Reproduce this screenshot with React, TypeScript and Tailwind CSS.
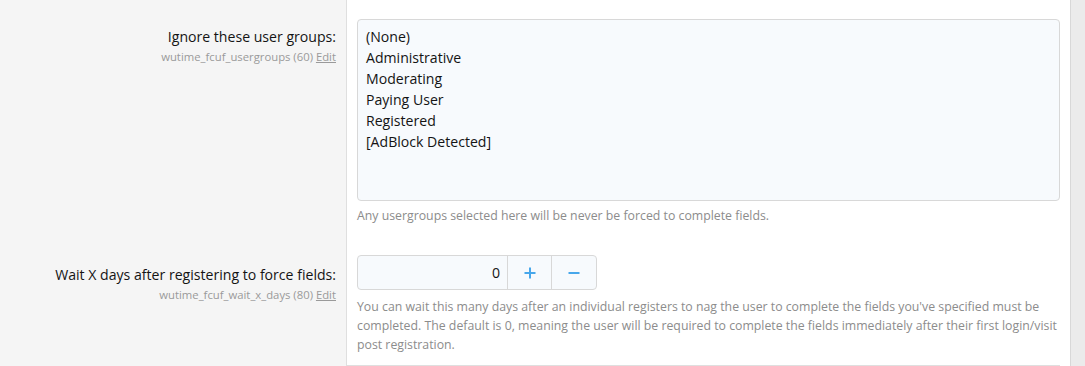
import React from "react";

const font = { fontFamily: '"Open Sans", "Segoe UI", sans-serif' };

function Hint({ name, order }: { name: string; order: number }) {
  return (
    <div className="text-[11.3px] leading-[16px] text-[#9a9a9a] mt-[2px]">
      {name} ({order}) <span className="underline">Edit</span>
    </div>
  );
}

export default function App() {
  const groups = ["(None)", "Administrative", "Moderating", "Paying User", "Registered", "[AdBlock Detected]"];
  return (
    <div className="flex w-[1085px] h-[366px] overflow-hidden bg-white" style={font}>
      <div className="flex flex-col w-[1071px] border-r border-[#d8d8d8]">
        {/* Row 1 */}
        <div className="flex">
          <div className="w-[347px] shrink-0 bg-[#f5f5f5] border-r border-[#dfdfdf] pr-[10px] pt-[27px] text-right">
            <div className="text-[14.1px] leading-[20px] text-[#141414]">Ignore these user groups:</div>
            <Hint name="wutime_fcuf_usergroups" order={60} />
          </div>
          <div className="flex-1 pl-[10px] pr-[10px] pt-[19px] pb-[20px]">
            <div className="w-[703px] h-[182px] border border-[#d8d8d8] rounded-[4px] bg-[#f7fafd] px-[8px] pt-[6px] text-[14.1px] leading-[21px] text-[#141414]">
              {groups.map((g) => (
                <div key={g}>{g}</div>
              ))}
            </div>
            <div className="mt-[5px] text-[12.3px] leading-[19px] text-[#8c8c8c]">
              Any usergroups selected here will be never be forced to complete fields.
            </div>
          </div>
        </div>
        {/* Row 2 */}
        <div className="flex flex-1">
          <div className="w-[347px] shrink-0 bg-[#f5f5f5] border-r border-[#dfdfdf] pr-[10px] pt-[20px] text-right">
            <div className="text-[14.1px] leading-[20px] text-[#141414]">Wait X days after registering to force fields:</div>
            <Hint name="wutime_fcuf_wait_x_days" order={80} />
          </div>
          <div className="flex-1 flex flex-col">
            <div className="flex-1 pl-[10px] pr-[10px] pt-[10px]">
              <div className="flex w-[240px] h-[35px] border border-[#d8d8d8] rounded-[4px] bg-[#f7fafd]">
                <div className="w-[149px] flex items-center justify-end pr-[7px] text-[14.1px] text-[#141414]">0</div>
                <div className="w-[44px] border-l border-[#d8d8d8] flex items-center justify-center">
                  <svg width="12" height="12" viewBox="0 0 12 12">
                    <path d="M6 0.5v11M0.5 6h11" stroke="#47a7eb" strokeWidth="2" />
                  </svg>
                </div>
                <div className="flex-1 border-l border-[#d8d8d8] flex items-center justify-center">
                  <svg width="12" height="12" viewBox="0 0 12 12">
                    <path d="M0.5 6h11" stroke="#47a7eb" strokeWidth="2" />
                  </svg>
                </div>
              </div>
              <div className="mt-[7px] text-[12.3px] leading-[19px] text-[#8c8c8c] pr-[2px]">
                You can wait this many days after an individual registers to nag the user to complete the fields you've specified must be completed. The default is 0, meaning the user will be required to complete the fields immediately after their first login/visit post registration.
              </div>
            </div>
            <div className="h-[1px] bg-[#dfdfdf] mr-[10px]" />
          </div>
        </div>
      </div>
      <div className="flex-1 bg-[#ebebeb]" />
    </div>
  );
}
